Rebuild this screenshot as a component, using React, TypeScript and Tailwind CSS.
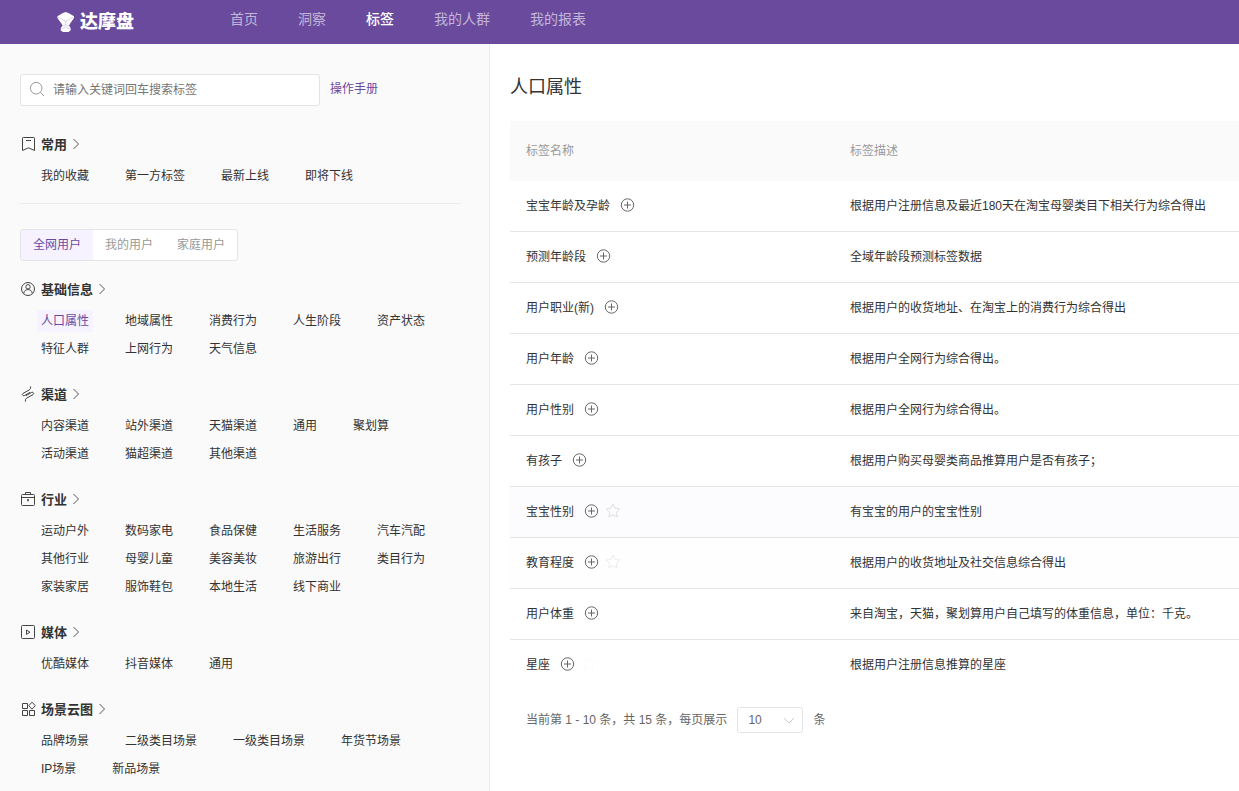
import React from "react";

const navItems = ["首页", "洞察", "标签", "我的人群", "我的报表"];
const activeNav = "标签";

type IconProps = { children: React.ReactNode };

function Icon({ children }: IconProps) {
  return (
    <svg
      viewBox="0 0 14 14"
      className="mb-0.5 size-3.5 shrink-0 overflow-visible"
      fill="none"
      stroke="currentColor"
      strokeWidth="1"
      strokeLinejoin="round"
      aria-hidden="true"
    >
      {children}
    </svg>
  );
}

const BookmarkIcon = () => (
  <Icon>
    <path d="M1.5 1.3 Q1.5 0.5 2.3 0.5 H12.7 Q13.5 0.5 13.5 1.3 V13.5 L7.5 10.8 L1.5 13.5 Z" />
    <path d="M5 3.5 H10" />
  </Icon>
);

const UserIcon = () => (
  <Icon>
    <circle cx="7" cy="7" r="6.5" />
    <circle cx="7" cy="4.8" r="2.2" />
    <path d="M2.7 11.6 C3 8.6 5 7.6 7 7.6 C9 7.6 11 8.6 11.3 11.6" />
  </Icon>
);

const ChannelIcon = () => (
  <Icon>
    <path d="M9.6 -0.6 Q10 1.8 8.4 2.8 L2 6.4 Q0.6 7.8 2 8.6 Q2.8 9 3.8 8.4 L9 5.4" />
    <path d="M4.4 14.6 Q4 12.2 5.6 11.2 L12 7.6 Q13.4 6.2 12 5.4 Q11.2 5 10.2 5.6 L5 8.6" />
  </Icon>
);

const BriefcaseIcon = () => (
  <Icon>
    <rect x="0.5" y="2.5" width="13" height="11" rx="1" />
    <path d="M4.5 2.5 V0.5 H9.5 V2.5 M0.5 5.5 H13.5" />
    <path d="M6.5 7.5 H7.5 L7 9.2 Z" fill="currentColor" />
  </Icon>
);

const MediaIcon = () => (
  <Icon>
    <rect x="0.5" y="0.5" width="13" height="13" rx="1" />
    <path d="M5.5 5 L9 7.2 L5.5 9.4 Z" />
  </Icon>
);

const SceneIcon = () => (
  <Icon>
    <rect x="1.5" y="1.5" width="5" height="5" />
    <rect x="1.5" y="8.5" width="5" height="5" />
    <rect x="8.5" y="8.5" width="5" height="5" />
    <path d="M11 0.2 L14.3 3.7 L11 7.2 L7.7 3.7 Z" />
  </Icon>
);

type Group = { title: string; icon: React.ReactNode; links: string[] };

const common: Group = {
  title: "常用",
  icon: <BookmarkIcon />,
  links: ["我的收藏", "第一方标签", "最新上线", "即将下线"],
};

const groups: Group[] = [
  {
    title: "基础信息",
    icon: <UserIcon />,
    links: ["人口属性", "地域属性", "消费行为", "人生阶段", "资产状态", "特征人群", "上网行为", "天气信息"],
  },
  {
    title: "渠道",
    icon: <ChannelIcon />,
    links: ["内容渠道", "站外渠道", "天猫渠道", "通用", "聚划算", "活动渠道", "猫超渠道", "其他渠道"],
  },
  {
    title: "行业",
    icon: <BriefcaseIcon />,
    links: [
      "运动户外", "数码家电", "食品保健", "生活服务", "汽车汽配",
      "其他行业", "母婴儿童", "美容美妆", "旅游出行", "类目行为",
      "家装家居", "服饰鞋包", "本地生活", "线下商业",
    ],
  },
  { title: "媒体", icon: <MediaIcon />, links: ["优酷媒体", "抖音媒体", "通用"] },
  {
    title: "场景云图",
    icon: <SceneIcon />,
    links: ["品牌场景", "二级类目场景", "一级类目场景", "年货节场景", "IP场景", "新品场景"],
  },
];

const tabs = ["全网用户", "我的用户", "家庭用户"];

type Row = { name: string; desc: string; star?: string; bg?: string };

const rows: Row[] = [
  { name: "宝宝年龄及孕龄", desc: "根据用户注册信息及最近180天在淘宝母婴类目下相关行为综合得出" },
  { name: "预测年龄段", desc: "全域年龄段预测标签数据" },
  { name: "用户职业(新)", desc: "根据用户的收货地址、在淘宝上的消费行为综合得出" },
  { name: "用户年龄", desc: "根据用户全网行为综合得出。" },
  { name: "用户性别", desc: "根据用户全网行为综合得出。" },
  { name: "有孩子", desc: "根据用户购买母婴类商品推算用户是否有孩子；" },
  { name: "宝宝性别", desc: "有宝宝的用户的宝宝性别", star: "text-[#dedede]", bg: "bg-[#fcfcfe]" },
  { name: "教育程度", desc: "根据用户的收货地址及社交信息综合得出", star: "text-[#ececec]", bg: "bg-[#fefefe]" },
  { name: "用户体重", desc: "来自淘宝，天猫，聚划算用户自己填写的体重信息，单位：千克。" },
  { name: "星座", desc: "根据用户注册信息推算的星座", star: "text-[#fcfcfc]" },
];

function LinkGroup({ group }: { group: Group }) {
  return (
    <section>
      <h2 className="flex h-[34px] items-center text-[13px] font-bold">
        <a href="#" className="flex items-center">
          <span className="mr-1.5 ml-px text-[#444]">{group.icon}</span>
          {group.title}
          <svg
            viewBox="0 0 6 10"
            className="mb-0.5 ml-1.5 h-2.5 w-1.5 overflow-visible text-[#555]"
            fill="none"
            stroke="currentColor"
            aria-hidden="true"
          >
            <path d="M0.5 0 L5.5 5 L0.5 10" />
          </svg>
        </a>
      </h2>
      <ul className="flex flex-wrap gap-x-7 pl-[17px]">
        {group.links.map((link) => (
          <li key={link} className="flex h-7 items-center">
            <a
              href="#"
              className={
                link === "人口属性"
                  ? "rounded-[3px] bg-[#f6f2ff] px-1 leading-[22px] text-[#6b4a9e]"
                  : "px-1 leading-[22px]"
              }
            >
              {link}
            </a>
          </li>
        ))}
      </ul>
    </section>
  );
}

export default function App() {
  return (
    <div className="flex min-h-screen flex-col bg-white font-['Liberation_Sans','Noto_Sans_CJK_SC',sans-serif] text-xs text-[#333]">
      <header className="flex h-11 shrink-0 items-center bg-[#6a4a9d] pl-14">
        <a href="#" className="flex w-[154px] items-center gap-1 text-white">
          <svg viewBox="0 0 20 22" className="h-[22px] w-5" aria-hidden="true">
            <path
              fill="#fff"
              d="M9.7 1 L13 2.2 L18 5.2 V7 L14.2 12.4 L13 14.6 L14.6 17 V19.4 L12.4 21 H7 L4.8 19.4 V17 L6.6 14.6 L5.4 12.4 L1.4 7 V5.2 L6.4 2.2 Z"
            />
            <path
              fill="none"
              stroke="#6a4a9d"
              strokeOpacity="0.4"
              strokeWidth="0.6"
              d="M2 6.2 L9.7 10.2 L17.4 6.2 M9.7 10.2 V13 M6.6 14.8 H8.4 L9.7 13 L11 14.8 H13 M5.6 17 Q7.4 18.8 9.7 15.6 Q12 18.8 13.8 17"
            />
          </svg>
          <span className="text-lg leading-6 font-black">达摩盘</span>
        </a>
        <nav className="flex items-center pb-1.5">
          {navItems.map((item) => (
            <a
              key={item}
              href="#"
              className={
                item === activeNav
                  ? "px-5 text-sm font-medium whitespace-nowrap text-white"
                  : "px-5 text-sm whitespace-nowrap text-[#c3b6d8]"
              }
            >
              {item}
            </a>
          ))}
        </nav>
      </header>

      <div className="flex grow">
        <aside className="w-[490px] shrink-0 border-r border-[#ebebeb] bg-[#fafafa] pt-[30px] pr-7 pl-5">
          <div className="flex items-center gap-2.5">
            <label className="flex h-8 w-[300px] items-center gap-2 rounded-[3px] border border-[#e3e4e6] bg-white px-2">
              <svg
                viewBox="0 0 16 16"
                className="mb-0.5 size-4 shrink-0 text-[#999]"
                fill="none"
                stroke="currentColor"
                aria-hidden="true"
              >
                <circle cx="7.2" cy="7.2" r="5.8" />
                <path d="M11.4 11.4 L15 15" />
              </svg>
              <input
                type="text"
                aria-label="搜索标签"
                placeholder="请输入关键词回车搜索标签"
                className="w-full bg-transparent outline-none placeholder:text-[#757575]"
              />
            </label>
            <a href="#" className="pb-0.5 text-[#6b4a9e]">
              操作手册
            </a>
          </div>

          <div className="mt-[22px] border-b border-[#ebebeb] pb-[13px]">
            <LinkGroup group={common} />
          </div>

          <div className="mt-[25px] mb-3 flex">
            <div className="flex overflow-hidden rounded-[3px] border border-[#e3e4e6] bg-white">
              {tabs.map((tab, i) => (
                <button
                  key={tab}
                  type="button"
                  className={
                    i === 0
                      ? "h-[30px] bg-[#f6f2ff] px-3 text-[#6b4a9e]"
                      : "h-[30px] px-3 text-[#999]"
                  }
                >
                  {tab}
                </button>
              ))}
            </div>
          </div>

          <div className="flex flex-col gap-[15px]">
            {groups.map((group) => (
              <LinkGroup key={group.title} group={group} />
            ))}
          </div>
        </aside>

        <main className="min-w-0 grow pt-7 pl-5">
          <h1 className="text-lg leading-[30px]">人口属性</h1>
          <table className="mt-[19px] w-full table-fixed border-separate border-spacing-0 text-left">
            <colgroup>
              <col className="w-[324px]" />
              <col />
            </colgroup>
            <thead>
              <tr className="h-[60px] bg-[#fafafa] text-[#999]">
                <th className="px-4 font-normal">标签名称</th>
                <th className="px-4 font-normal">标签描述</th>
              </tr>
            </thead>
            <tbody>
              {rows.map((row) => (
                <tr
                  key={row.name}
                  className={`group h-[51px] ${row.bg ?? ""}`}
                >
                  <td className="border-b border-[#e3e4e6] px-4 group-last:border-transparent">
                    <div className="flex items-center">
                      {row.name}
                      <button type="button" aria-label={`添加${row.name}`} className="ml-2.5 text-[#666]">
                        <Icon>
                          <circle cx="7.5" cy="7" r="6.2" />
                          <path d="M7.5 3.5 V10.5 M4 7 H11" />
                        </Icon>
                      </button>
                      {row.star && (
                        <button type="button" aria-label={`收藏${row.name}`} className={`ml-2 ${row.star}`}>
                          <Icon>
                            <path d="M7 0 L9.1 4.4 L13.8 5 L10.4 8.3 L11.2 13 L7 10.8 L2.8 13 L3.6 8.3 L0.2 5 L4.9 4.4 Z" />
                          </Icon>
                        </button>
                      )}
                    </div>
                  </td>
                  <td className="border-b border-[#e3e4e6] px-4 whitespace-nowrap group-last:border-transparent">
                    {row.desc}
                  </td>
                </tr>
              ))}
            </tbody>
          </table>

          <div className="mt-4 flex items-center pl-4 text-[#666]">
            <label htmlFor="page-size">当前第 1 - 10 条，共 15 条，每页展示</label>
            <div className="relative mx-2.5">
              <select
                id="page-size"
                defaultValue="10"
                className="block h-[26px] w-[66px] appearance-none rounded-[3px] border border-[#e3e4e6] bg-white pl-2.5"
              >
                <option>10</option>
                <option>20</option>
                <option>40</option>
              </select>
              <svg
                viewBox="0 0 12 7"
                className="pointer-events-none absolute top-2.5 right-2 h-[7px] w-3 text-[#ccc]"
                fill="none"
                stroke="currentColor"
                aria-hidden="true"
              >
                <path d="M0.8 0.8 L6 6 L11.2 0.8" />
              </svg>
            </div>
            <span>条</span>
          </div>
        </main>
      </div>
    </div>
  );
}
